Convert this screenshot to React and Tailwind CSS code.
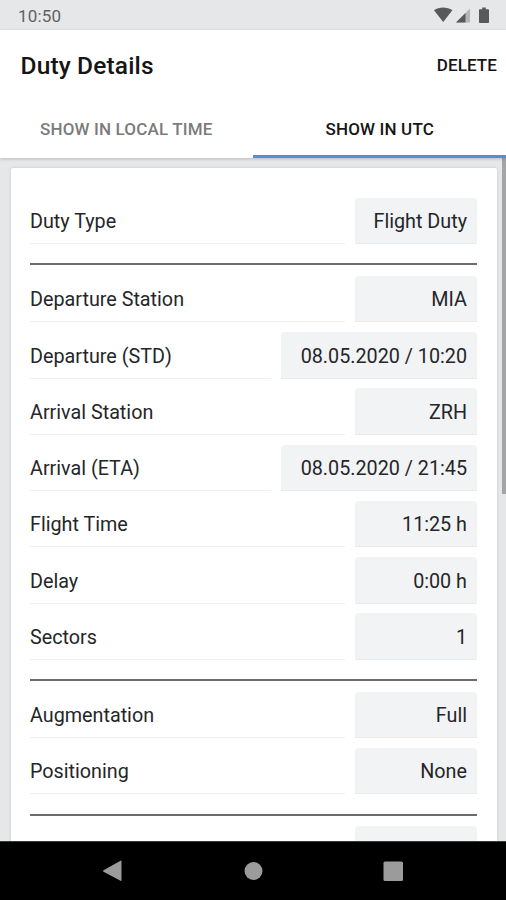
const sections = [
  [{ label: 'Duty Type', value: 'Flight Duty' }],
  [
    { label: 'Departure Station', value: 'MIA' },
    { label: 'Departure (STD)', value: '08.05.2020 / 10:20', wide: true },
    { label: 'Arrival Station', value: 'ZRH' },
    { label: 'Arrival (ETA)', value: '08.05.2020 / 21:45', wide: true },
    { label: 'Flight Time', value: '11:25 h' },
    { label: 'Delay', value: '0:00 h' },
    { label: 'Sectors', value: '1' },
  ],
  [
    { label: 'Augmentation', value: 'Full' },
    { label: 'Positioning', value: 'None' },
  ],
  [{ label: '', value: '' }],
];

function StatusBar() {
  return (
    <div className="flex h-[30px] shrink-0 items-center justify-between bg-[#e6e7e9] pl-[18px] pr-[16px] text-[#5f6164]">
      <span className="pt-[2px] text-[17px] leading-none tracking-[0.2px]">10:50</span>
      <svg width="56" height="18" viewBox="0 0 56 18" fill="#58595b">
        <path d="M0 4.2C5.2.6 13 .6 18.4 4.2L9.2 16z" />
        <path d="M36 2.5V16.5H22z" fill="#b4b5b7" />
        <path d="M31.5 7V16.5H22z" />
        <path d="M48.2 1.5h3.6v1.7h2.4q.8 0 .8.8v12.2q0 .8-.8.8h-8.4q-.8 0-.8-.8V4q0-.8.8-.8h2.4z" />
      </svg>
    </div>
  );
}

function Row({ label, value, wide }) {
  return (
    <div className="flex h-[46.5px] gap-[10px]">
      <div className="flex flex-1 items-center border-b border-[#eeeff0] pt-[3.5px]">{label}</div>
      <div
        className={`flex items-center justify-end rounded-t-[4px] border-b border-[#e9eaeb] bg-[#f2f3f5] pr-[10px] pt-[3.5px] ${
          wide ? 'w-[196px]' : 'w-[122px]'
        }`}
      >
        {value}
      </div>
    </div>
  );
}

export default function App() {
  return (
    <div className="flex h-[900px] w-[506px] flex-col overflow-hidden bg-[#e6e7e9] font-['Roboto',sans-serif] text-[#252628]">
      <StatusBar />

      <header className="z-10 shrink-0 bg-white shadow-[0_1px_3px_rgba(0,0,0,0.2)]">
        <div className="flex h-[71px] items-center justify-between pl-[20.5px] pr-[9px] font-medium text-[#151515]">
          <h1 className="pt-[1px] text-[24.5px] tracking-[0.15px]">Duty Details</h1>
          <button className="text-[17px] tracking-[0.1px]">DELETE</button>
        </div>
        <div className="flex h-[57px] text-[17px] font-medium tracking-[0.15px]">
          <button className="flex-1 pt-[1px] text-[#7b7b7b]">SHOW IN LOCAL TIME</button>
          <button className="flex-1 border-b-[3px] border-[#5b8bd0] pl-[1px] pt-[4px] text-[#151515]">SHOW IN UTC</button>
        </div>
      </header>

      <main className="flex min-h-0 flex-1 justify-between overflow-hidden">
        <div className="ml-[11px] mt-[10px] h-[800px] w-[485.5px] rounded-t-[2px] bg-white pl-[19px] pr-[19.5px] pt-[29.5px] text-[19.75px] shadow-[0_0_3px_rgba(0,0,0,0.15)]">
          {sections.map((rows, i) => (
            <section key={i}>
              {i > 0 && <hr className="mb-[10.5px] mt-[19.25px] border-t-2 border-[#6c6c6e]" />}
              <div className="flex flex-col gap-[9.75px]">
                {rows.map((row) => (
                  <Row key={row.label} {...row} />
                ))}
              </div>
            </section>
          ))}
        </div>
        <div className="h-[336px] w-[4.5px] bg-[#a4a5a6]" />
      </main>

      <nav className="z-10 flex h-[59px] shrink-0 items-center justify-center border-t border-[#3a3a3a] bg-black">
        <svg width="506" height="58" viewBox="0 0 506 58" fill="#9b9b9b">
          <path d="M103.5 28.2L120.5 18.7Q121.5 18.2 121.5 19.5V38Q121.5 39.3 120.5 38.8L103.5 29.8Q102.5 29 103.5 28.2z" />
          <circle cx="253.5" cy="29" r="9" />
          <rect x="383.5" y="19.5" width="19.5" height="19.5" rx="1.5" />
        </svg>
      </nav>
    </div>
  );
}
